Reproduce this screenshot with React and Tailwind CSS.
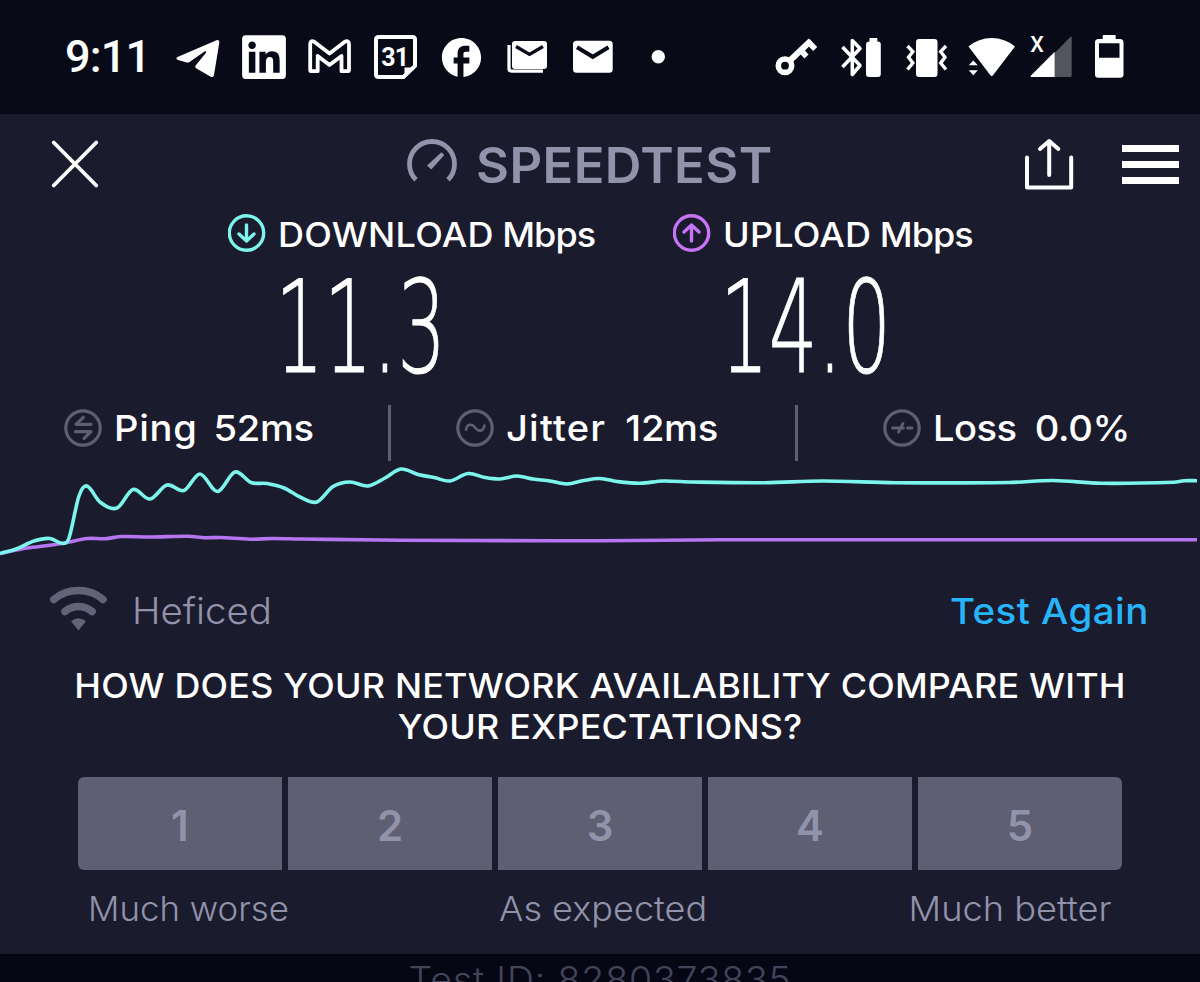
import React from "react";
import { FaLinkedin } from "react-icons/fa";
import { MdFacebook } from "react-icons/md";

const downloadPoints = [
  [0, 553.5], [16, 549], [34, 541], [50, 538.5], [63, 543.5], [69, 538],
  [79, 496], [87, 486], [100, 502], [117, 508], [133, 489.5], [150, 499],
  [167, 485], [184, 490.5], [200, 474], [217.5, 491.5], [235, 472],
  [251, 482.5], [267, 483.5], [284, 488], [302, 498], [317, 502],
  [333, 486.5], [350, 482], [368, 486], [385, 478], [401, 469],
  [418, 474.5], [434, 477.5], [450, 481], [468, 473.5], [485, 477.5],
  [500, 479], [517, 476], [533, 479], [550, 481], [567, 484], [584, 480.5],
  [600, 478.5], [617, 481.5], [640, 483.3], [663, 481], [692, 482],
  [765, 482.7], [822, 481], [895, 482.7], [1009, 482.5], [1053, 480.5],
  [1101, 483.3], [1174, 482.3], [1184, 480.7], [1197, 480.7],
];

const uploadPoints = [
  [0, 553.5], [27, 548], [50, 545.3], [68, 542.3], [87, 538.5], [105, 538.7],
  [122, 536.5], [150, 537], [188, 536.2], [205, 537.7], [220, 537.5],
  [250, 539.2], [272, 538.5], [300, 539], [400, 540.3], [600, 540.7],
  [720, 539.8], [900, 539.7], [1197, 539.7],
];

const ratings = [1, 2, 3, 4, 5];

const toPath = (pts) => {
  let d = `M${pts[0][0]} ${pts[0][1]}`;
  for (let i = 0; i < pts.length - 1; i++) {
    const p0 = pts[i - 1] || pts[i];
    const p1 = pts[i];
    const p2 = pts[i + 1];
    const p3 = pts[i + 2] || p2;
    const dx = (p2[0] - p1[0]) / 3;
    const s1 = (p2[1] - p0[1]) / (p2[0] - p0[0]);
    const s2 = (p3[1] - p1[1]) / (p3[0] - p1[0]);
    d += ` C${p1[0] + dx} ${p1[1] + s1 * dx} ${p2[0] - dx} ${p2[1] - s2 * dx} ${p2[0]} ${p2[1]}`;
  }
  return d;
};

const StatusBar = () => (
  <div className="flex h-[114px] items-center bg-[#090a18] pr-[62px] pl-[65px] text-white">
    <span className="w-[107px] font-['Roboto'] text-[45px] leading-[54px] font-medium tracking-[-0.8px] whitespace-nowrap">
      9:11
    </span>
    {/* Telegram */}
    <svg width="60" height="54" viewBox="172 30 60 54" fill="currentColor">
      <path d="M177.5 57L216.5 40.2Q219.8 39.2 219.3 42.5L214 75Q213.3 78 210.3 76.5L196.5 68.5Q194.3 67 196 65L206.2 52.5Q206.5 50.8 204.5 51.5L189.5 62Q188 63 186 62.3L178 60Q175 58.5 177.5 57Z" />
    </svg>
    <div className="flex w-16 items-center pl-[10px]">
      <FaLinkedin className="h-[50px] w-[44px]" />
    </div>
    {/* Gmail */}
    <svg width="66" height="54" viewBox="296 30 66 54" fill="none" stroke="currentColor" strokeWidth="3.8" strokeLinejoin="round">
      <path d="M311.5 71.2Q310.2 71.2 310.2 70V44.5Q310.2 39.5 314.5 42L329.5 53.5L344.5 42Q349 39.5 349 44.5V70Q349 71.2 347.7 71.2H341.5V56L329.5 65L317.7 56V71.2Z" />
    </svg>
    {/* Calendar */}
    <svg width="66" height="54" viewBox="362 30 66 54">
      <path
        d="M379 37H412.5Q415 37 415 39.5V66L403.5 77H379Q376 77 376 74.5V39.5Q376 37 379 37Z"
        fill="none"
        stroke="currentColor"
        strokeWidth="4"
      />
      <path d="M404.5 77.5V67.5H415.5Z" fill="currentColor" />
      <text x="394.8" y="65.5" textAnchor="middle" fill="currentColor" className="font-['Roboto'] text-[25px] font-bold tracking-[-0.8px]">
        31
      </text>
    </svg>
    <div className="flex w-[66px] items-center pl-[10px]">
      <MdFacebook className="size-[47px]" />
    </div>
    {/* Mail stack */}
    <svg width="66" height="54" viewBox="494 30 66 54">
      <rect x="512" y="41" width="35" height="28" rx="3" fill="currentColor" />
      <path d="M509 45V68.5Q509 71.2 511.7 71.2H543" fill="none" stroke="currentColor" strokeWidth="3.2" />
      <path d="M516 46.5L529.5 54.5L543 46.5" fill="none" stroke="#090a18" strokeWidth="3.2" />
    </svg>
    {/* Mail */}
    <svg width="66" height="54" viewBox="560 30 66 54">
      <rect x="573" y="40.7" width="39.7" height="32" rx="3.5" fill="currentColor" />
      <path d="M577 47.3L592.8 56.8L608.5 47.3" fill="none" stroke="#090a18" strokeWidth="4" />
    </svg>
    <svg width="64" height="54" viewBox="626 30 64 54" fill="currentColor">
      <circle cx="658.3" cy="56.7" r="6.7" />
    </svg>

    {/* VPN key */}
    <svg className="ml-auto" width="58" height="54" viewBox="770 30 58 54" fill="none" stroke="currentColor" strokeWidth="5.6">
      <circle cx="785" cy="65.7" r="6.7" />
      <path d="M790.5 60L810.8 40.8" strokeWidth="6" />
      <path d="M807.5 41L815.2 49M800.5 50L806.5 56.5" />
    </svg>
    {/* Bluetooth + device battery */}
    <svg width="65" height="54" viewBox="828 30 65 54">
      <path d="M842.5 47L860 65.5L852.3 74.5V40.5L860 48.5L842.5 67" fill="none" stroke="currentColor" strokeWidth="3.5" strokeLinejoin="round" />
      <path d="M869.5 38H877.3V41.5H878Q880.8 41.5 880.8 44.5V74Q880.8 77 878 77H869Q866 77 866 74V44.5Q866 41.5 869.5 41.5Z" fill="currentColor" />
    </svg>
    {/* Vibrate */}
    <svg width="65" height="54" viewBox="893 30 65 54">
      <rect x="916" y="39" width="21.5" height="38" rx="3" fill="currentColor" />
      <path
        d="M907.5 46L912.8 51.7L908.5 57.3L912.8 63L907.5 69.5M946 46L940.7 51.7L945 57.3L940.7 63L946 69.5"
        fill="none"
        stroke="currentColor"
        strokeWidth="3.4"
      />
    </svg>
    {/* Wifi */}
    <svg width="64" height="54" viewBox="958 30 64 54" fill="currentColor">
      <path d="M968.5 46.5Q978.5 38 991.7 38T1015 46.5L993.2 75Q991.7 77 990.2 75Z" />
      <path d="M968.8 65.3L973.3 60.5L977.8 65.3ZM968.8 70.3H977.8L973.3 75.3Z" />
    </svg>
    {/* Mobile signal */}
    <svg width="60" height="54" viewBox="1022 30 60 54">
      <path d="M1054.7 77V53L1070.5 36.8Q1071.7 36 1071.7 37.5V75.5Q1071.7 77 1070 77Z" fill="#54545f" />
      <path d="M1031 77Q1030 76.5 1031 75.5L1054.7 51.8V77Z" fill="currentColor" />
      <text x="1037" y="51.7" textAnchor="middle" fill="currentColor" className="font-['Roboto'] text-[21.5px] font-medium">
        X
      </text>
    </svg>
    {/* Battery */}
    <svg width="56" height="54" viewBox="1082 30 56 54" fill="currentColor">
      <path
        fillRule="evenodd"
        d="M1102.7 36Q1102.7 35 1104 35H1114.5Q1115.7 35 1115.7 36V39H1120Q1123.5 39 1123.5 42.5V74.5Q1123.5 77.8 1120 77.8H1098.5Q1095 77.8 1095 74.5V42.5Q1095 39 1098.5 39H1102.7ZM1099 43.3V57.8H1119.5V43.3Z"
      />
    </svg>
  </div>
);

const Header = () => (
  <div className="flex h-[100px] items-center pr-[21px] pl-[50px]">
    <svg width="50" height="50" viewBox="50 139 50 50" fill="none" stroke="white" strokeWidth="3.8" strokeLinecap="round">
      <path d="M53.7 142.5L96.3 185.5M96.3 142.5L53.7 185.5" />
    </svg>
    <div className="ml-[305px] flex items-center text-[#9193aa]">
      <svg width="54" height="54" viewBox="405 137 54 54">
        <path d="M416 179.8A22.5 22.5 0 1 1 448 179.8" fill="none" stroke="currentColor" strokeWidth="4.8" />
        <path d="M427 165.5L441.5 152.3L444.3 155L431.3 169.5Z" fill="currentColor" />
      </svg>
      <h1 className="mt-[3px] ml-[17px] w-[310px] origin-left scale-x-[1.035] text-[49px] leading-[50px] font-semibold tracking-[0.4px] whitespace-nowrap">
        SPEEDTEST
      </h1>
    </div>
    <svg className="ml-auto" width="52" height="54" viewBox="1023 137 52 54" fill="none" stroke="white" strokeWidth="4" strokeLinecap="round" strokeLinejoin="round">
      <path d="M1027 157.5V187.5H1071.2V157.5M1049.2 141V175M1040 149L1049.2 141L1058.4 149" />
    </svg>
    <div className="ml-[47px] flex w-[57px] flex-col gap-[9px]">
      <span className="h-[7px] bg-white" />
      <span className="h-[7px] bg-white" />
      <span className="h-[7px] bg-white" />
    </div>
  </div>
);

const Speed = ({ label, value, color, arrow }) => (
  <div>
    <div className="flex h-10 items-center">
      <svg className="-mt-0.5" width="38" height="38" viewBox="0 0 38 38" fill="none" stroke={color} strokeWidth="3.4" strokeLinecap="round" strokeLinejoin="round">
        <circle cx="18.5" cy="19" r="17.2" />
        <path d={arrow} />
      </svg>
      <div className="mt-px ml-[12px] flex origin-left scale-x-[1.06] gap-[8px] text-[34px] leading-10 font-[550] whitespace-nowrap">
        <span className="tracking-[0.2px]">{label}</span>
        <span className="tracking-[-0.9px]">Mbps</span>
      </div>
    </div>
    <div className="h-[142px] pt-[3px] pl-[47px]">
      <span className="inline-block origin-left scale-x-[0.6] font-['DejaVu_Sans'] text-[128px] leading-[142px] font-extralight whitespace-nowrap [-webkit-text-stroke:1px_white]">
        {value}
      </span>
    </div>
  </div>
);

const Metric = ({ label, value, labelClass, children }) => (
  <div className="flex items-center">
    <svg className="mr-[12px]" width="38" height="38" viewBox="0 0 38 38" fill="none" stroke="#5e5f73" strokeWidth="3.2" strokeLinecap="round" strokeLinejoin="round">
      <circle cx="19" cy="19" r="17.2" />
      {children}
    </svg>
    <div className="flex origin-left scale-x-[1.06] text-[36px] leading-10 font-[550] whitespace-nowrap">
      <span className={labelClass}>{label}</span>
      <span className="tracking-[-0.3px]">{value}</span>
    </div>
  </div>
);

const Metrics = () => (
  <div className="flex h-16 items-center pl-[64px]">
    <div className="w-[324px]">
      <Metric label="Ping" value="52ms" labelClass="mr-[15px] tracking-[0.7px]">
        <path d="M27 15.3H12L19.3 8.3M11.5 22.7H27L20 29.3" />
      </Metric>
    </div>
    <span className="mt-[10px] h-14 w-[3px] bg-[#5e5f73]" />
    <div className="w-[404px] pl-[65px]">
      <Metric label="Jitter" value="12ms" labelClass="mr-[18px] tracking-[1.1px]">
        <path d="M10 20.8C11 14.5 16 14.5 19 18.5S27 23.5 28.5 16.5" strokeWidth="2.6" />
      </Metric>
    </div>
    <span className="mt-[10px] h-14 w-[3px] bg-[#5e5f73]" />
    <div className="pl-[85px]">
      <Metric label="Loss" value="0.0%" labelClass="mr-[17px] tracking-[-0.5px]">
        <path d="M9.5 19H16M15.5 23L20 14.5M18.5 19H20.5M24.5 19H29" strokeWidth="2.8" />
      </Metric>
    </div>
  </div>
);

const Chart = () => (
  <svg className="block" width="1200" height="104" viewBox="0 460 1200 104" fill="none" strokeWidth="3.6">
    <path d={toPath(uploadPoints)} stroke="#b574f0" />
    <path d={toPath(downloadPoints)} stroke="#7cf6ec" />
  </svg>
);

const App = () => {
  return (
    <div className="h-[982px] w-[1200px] overflow-hidden bg-[#060715] font-['Inter',sans-serif] text-white">
      <StatusBar />
      <main className="h-[840px] bg-[#1b1b2e]">
        <Header />
        <div className="grid grid-cols-[445px_1fr] pl-[228px]">
          <Speed label="DOWNLOAD" value="11.3" color="#7cf6ec" arrow="M18.5 11V27M11 20L18.5 27L26 20" />
          <Speed label="UPLOAD" value="14.0" color="#c774f5" arrow="M18.5 27V11M11 18L18.5 11L26 18" />
        </div>
        <Metrics />
        <Chart />

        {/* Provider */}
        <div className="flex h-[93px] items-center pr-[51px] pl-[49px]">
          <svg width="60" height="50" viewBox="49 585.5 60 50" fill="none" stroke="#626377" strokeWidth="7.6" strokeLinecap="round">
            <path d="M53.8 599Q64 590 78.5 590T103 599M65 611Q71 606 78.5 606T92 611" />
            <path d="M71 620.7Q78.5 615 86 620.7L78.5 630Z" fill="#626377" stroke="none" />
          </svg>
          <span className="ml-[23px] origin-left scale-x-[1.04] text-[37px] leading-10 font-light whitespace-nowrap text-[#9193aa]">
            Heficed
          </span>
          <button className="ml-auto origin-right scale-x-[1.07] text-[36px] leading-10 font-[550] tracking-[0.4px] whitespace-nowrap text-[#27b4fa]">
            Test Again
          </button>
        </div>

        {/* Survey */}
        <h2 className="scale-x-[1.055] pt-[9px] text-center text-[34px] leading-[40.5px] font-[550] tracking-[0.2px] whitespace-nowrap">
          HOW DOES YOUR NETWORK AVAILABILITY COMPARE WITH
          <br />
          YOUR EXPECTATIONS?
        </h2>
        <div className="mx-[78px] mt-[30px] flex h-[93px] gap-[6px] overflow-hidden rounded-md">
          {ratings.map((n) => (
            <button key={n} className="flex-1 bg-[#5e5f73] pt-[3px] text-[42px] font-semibold text-[#9193aa]">
              {n}
            </button>
          ))}
        </div>
        <div className="flex h-[77px] items-center justify-between pr-[88px] pl-[88px] text-[34px] leading-10 font-light text-[#9193aa]">
          <span className="origin-left scale-x-[1.025]">Much worse</span>
          <span className="scale-x-[1.06]">As expected</span>
          <span className="origin-right scale-x-[1.065]">Much better</span>
        </div>
      </main>
      <footer className="scale-x-[1.07] pt-[5px] text-center text-[35px] leading-10 font-light tracking-[0.8px] text-[#43445a]">
        Test ID: 8280373835
      </footer>
    </div>
  );
};

export default App;
